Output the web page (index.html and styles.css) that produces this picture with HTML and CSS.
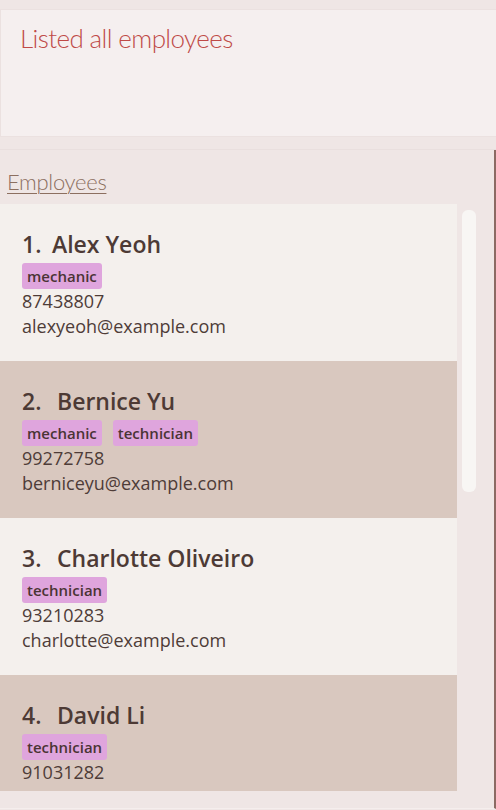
FILE: index.html
```html
<!DOCTYPE html>
<html>
<head>
<meta charset="utf-8">
<link rel="stylesheet" href="styles.css">
</head>
<body>
<div class="result-box">
  <div class="result-text">Listed all employees</div>
</div>
<div class="sep"></div>
<div class="panel">
  <div class="panel-title">Employees</div>
  <div class="list-area">
    <div class="cards">
      <div class="card">
        <div class="name"><span class="idx">1.</span>Alex Yeoh</div>
        <div class="tags"><span class="tag">mechanic</span></div>
        <div class="line">87438807</div>
        <div class="line">alexyeoh@example.com</div>
      </div>
      <div class="card alt">
        <div class="name"><span class="idx wide">2.</span>Bernice Yu</div>
        <div class="tags"><span class="tag">mechanic</span><span class="tag">technician</span></div>
        <div class="line">99272758</div>
        <div class="line">berniceyu@example.com</div>
      </div>
      <div class="card">
        <div class="name"><span class="idx wide">3.</span>Charlotte Oliveiro</div>
        <div class="tags"><span class="tag">technician</span></div>
        <div class="line">93210283</div>
        <div class="line">charlotte@example.com</div>
      </div>
      <div class="card alt short">
        <div class="name"><span class="idx wide">4.</span>David Li</div>
        <div class="tags"><span class="tag">technician</span></div>
        <div class="line">91031282</div>
      </div>
    </div>
    <div class="scroll">
      <div class="thumb"></div>
    </div>
  </div>
</div>
</body>
</html>
```
FILE: styles.css
```css
html, body {
  margin: 0;
  padding: 0;
}
body {
  width: 496px;
  height: 810px;
  overflow: hidden;
  background: #efe6e5;
  font-family: "Open Sans", "Noto Sans", sans-serif;
}
.result-box {
  margin-top: 9px;
  height: 128px;
  box-sizing: border-box;
  background: #f5efef;
  border: 1px solid #ebe1e0;
  border-right: none;
  padding: 8px 19px;
}
.result-text {
  font-family: "Lato", "Open Sans", sans-serif;
  font-size: 26px;
  font-weight: 300;
  letter-spacing: -0.6px;
  color: #bf4a47;
  line-height: 40px;
}
.sep {
  height: 12px;
  border-bottom: 1px solid #e9dfde;
}
.panel {
  width: 496px;
  height: 659px;
  box-sizing: border-box;
  border-right: 2px solid #8b6a63;
  border-bottom: 1px solid #f5eeed;
  display: flex;
  flex-direction: column;
}
.panel-title {
  padding: 18px 0 0 7px;
  height: 36px;
  box-sizing: border-box;
  font-family: "Lato", "Open Sans", sans-serif;
  font-size: 22px;
  font-weight: 300;
  letter-spacing: -0.3px;
  color: #8c6f60;
  text-decoration: underline;
  text-decoration-thickness: 1px;
  text-underline-offset: 3px;
  line-height: 28px;
}
.list-area {
  display: flex;
  height: 588px;
  margin-top: 18px;
}
.cards {
  width: 457px;
  overflow: hidden;
}
.card {
  height: 157px;
  box-sizing: border-box;
  padding: 24px 22px 0;
  background: #f4f0ed;
  color: #4e3c38;
}
.card.alt {
  background: #d9c8bf;
}
.card.short {
  height: 116px;
}
.name {
  font-size: 23px;
  font-weight: 600;
  line-height: 32px;
  color: #4d3a35;
}
.idx {
  display: inline-block;
  width: 30px;
}
.idx.wide {
  width: 35px;
}
.tags {
  display: flex;
  gap: 11px;
  margin-top: 3px;
}
.tag {
  background: #dfa5dd;
  border-radius: 3px;
  padding: 0 5px;
  height: 26px;
  line-height: 26px;
  font-size: 15px;
  font-weight: 600;
  color: #4a3434;
}
.line {
  font-size: 18px;
  line-height: 25px;
}
.scroll {
  flex: 1;
  padding: 6px 0 0 5px;
}
.thumb {
  width: 14px;
  height: 282px;
  background: #f8f6f4;
  border-radius: 6px;
}
```
